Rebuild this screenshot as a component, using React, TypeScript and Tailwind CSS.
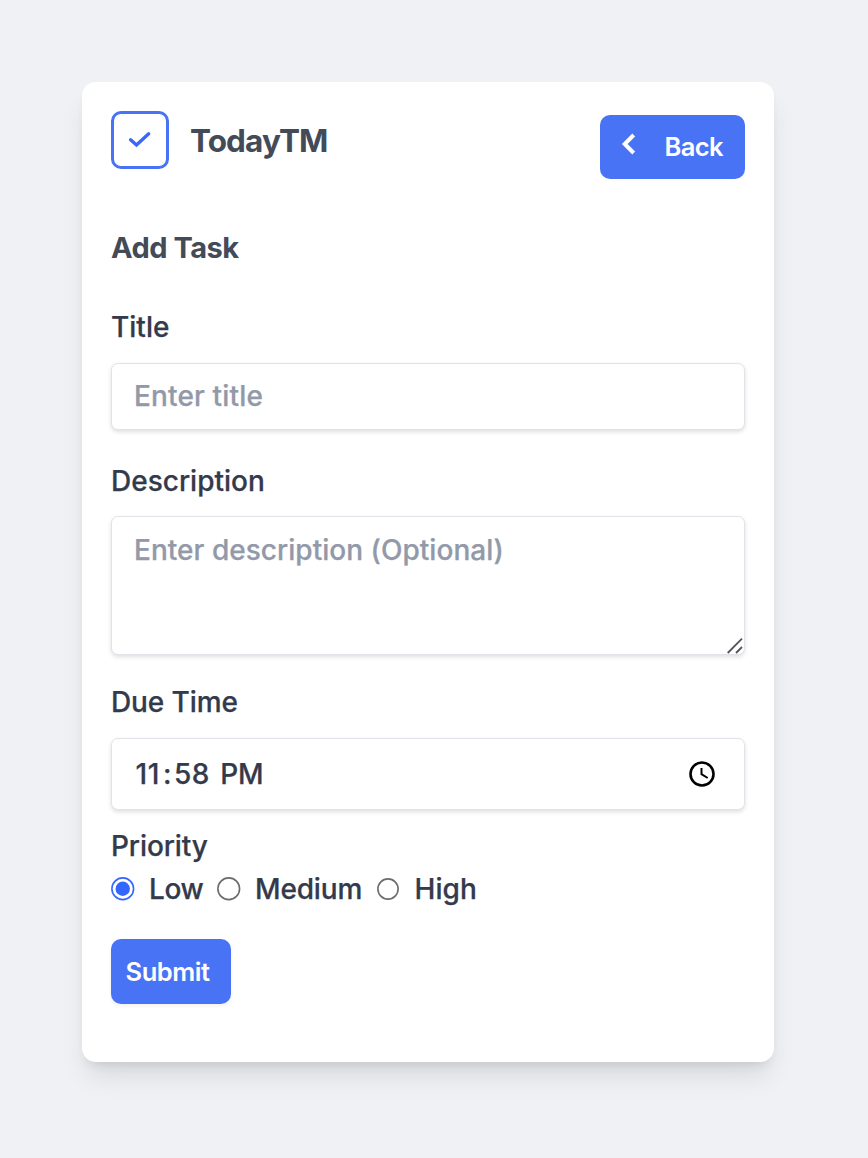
import { useState } from "react";

const field =
  "block w-full rounded-[7px] border border-[#e1e3e9] bg-white text-[28px] font-medium text-[#333a4b] shadow-[0_2px_4px_rgba(0,0,0,0.13)] outline-none placeholder:text-[#9299a8] placeholder:opacity-100";

const label = "block h-10 text-[28px] leading-10 font-medium [-webkit-text-stroke:0.25px_currentColor]";

function Radio({ checked, size }: { checked: boolean; size: number }) {
  const r = size / 2 - 0.9;
  return (
    <svg width={size} height={size} viewBox={`0 0 ${size} ${size}`} className="shrink-0">
      <circle cx={size / 2} cy={size / 2} r={r} fill="#fff" stroke={checked ? "#3366ff" : "#6b6b6b"} strokeWidth="1.6" />
      {checked && <circle cx={size / 2} cy={size / 2} r="7.2" fill="#3366ff" />}
    </svg>
  );
}

export default function App() {
  const [priority, setPriority] = useState("Low");
  const options = [
    { name: "Low", size: 23.5, gap: "w-[106px]", text: "ml-[14.5px] tracking-[-0.4px]" },
    { name: "Medium", size: 23.5, gap: "w-[160px]", text: "ml-[14.5px] tracking-[-0.15px]" },
    { name: "High", size: 22, gap: "w-[110px]", text: "ml-[15.5px] tracking-[0.1px]" },
  ];
  return (
    <main className="flex h-[1158px] w-[868px] items-start bg-[#eff1f5] pt-[82px] pl-[82px] font-['Inter','Liberation_Sans',sans-serif] text-[#333a4b]">
      <section className="flex h-[980px] w-[692px] flex-col rounded-[14px] bg-white px-[29px] pt-[29px] shadow-[0_18px_27px_-5px_rgba(0,0,0,0.1),0_7px_11px_-5px_rgba(0,0,0,0.1)]">
        <header className="flex h-[116px] items-start justify-between">
          <div className="flex items-center">
            <div className="flex size-[58px] items-center justify-center rounded-[10px] border-3 border-[#4973f5]">
              <svg width="24" height="18" viewBox="0 0 24 18" fill="none" stroke="#3b68f4" strokeWidth="3.4" strokeLinecap="round" strokeLinejoin="miter">
                <path d="M2.6 8.8 8.5 14 20.7 2.8" />
              </svg>
            </div>
            <h1 className="ml-[21px] pt-[2px] text-[31.5px] leading-[56px] font-bold tracking-[-0.9px] text-[#434b58]">TodayTM</h1>
          </div>
          <button className="mt-1 flex h-16 w-[145px] items-center rounded-[10px] bg-[#4973f5] pl-[21px] text-[25.5px] font-semibold text-white">
            <svg width="16" height="24" viewBox="0 0 16 24" fill="none" stroke="white" strokeWidth="4" className="mb-[7px]">
              <path d="M12.7 3 3.7 12l9 9" />
            </svg>
            <span className="ml-[27.5px] pt-px tracking-[-0.6px]">Back</span>
          </button>
        </header>
        <h2 className="h-[42px] text-[29px] leading-[42px] font-bold tracking-[-0.5px] text-[#434b58]">Add Task</h2>
        <form className="flex flex-col pt-[38px]" onSubmit={(e) => e.preventDefault()}>
          <label htmlFor="title" className={`${label} tracking-[0px]`}>Title</label>
          <input id="title" placeholder="Enter title" className={`${field} mt-4 h-[67px] px-[22px] pb-[2px] tracking-[0.15px] [-webkit-text-stroke:0.25px_currentColor]`} />
          <label htmlFor="description" className={`${label} mt-[31px] tracking-[0px]`}>Description</label>
          <div className="relative mt-[15px] h-[139px]">
            <textarea id="description" placeholder="Enter description (Optional)" className={`${field} h-[139px] resize-none px-[22px] pt-[13px] leading-10 tracking-[0.03px] [-webkit-text-stroke:0.25px_currentColor]`} />
            <svg width="16" height="16" viewBox="0 0 16 16" fill="none" stroke="#555" strokeWidth="1.8" className="pointer-events-none absolute right-[2px] bottom-[1.5px]">
              <path d="M.7 15 15 .7M9 15l6-6" />
            </svg>
          </div>
          <span className={`${label} mt-[27px] tracking-[-0.1px]`}>Due Time</span>
          <div className="mt-[16px] flex h-[72px] items-center justify-between rounded-[7px] border border-[#e1e3e9] bg-white pr-[29px] pl-[23.5px] text-[28px] font-medium shadow-[0_2px_4px_rgba(0,0,0,0.13)] [-webkit-text-stroke:0.25px_currentColor]">
            <div className="flex items-center">
              <span className="tracking-[0.6px]">11</span>
              <span className="ml-[3px]">:</span>
              <span className="ml-[2.5px] tracking-[0.4px]">58</span>
              <span className="ml-[10.5px] tracking-[-0.2px]">PM</span>
            </div>
            <svg width="26" height="26" viewBox="0 0 26 26" fill="none" stroke="black">
              <circle cx="13" cy="13" r="11.5" strokeWidth="2.6" />
              <path d="M12.5 7v6.2l6.2 3.8" strokeWidth="2" />
            </svg>
          </div>
          <span className={`${label} mt-[16px] tracking-[-0.1px]`}>Priority</span>
          <div role="radiogroup" className="mt-[3px] flex h-10 items-center">
            {options.map((o) => (
              <button key={o.name} type="button" role="radio" aria-checked={priority === o.name} onClick={() => setPriority(o.name)} className={`flex shrink-0 items-center text-[28px] leading-10 font-medium [-webkit-text-stroke:0.25px_currentColor] ${o.gap}`}>
                <Radio checked={priority === o.name} size={o.size} />
                <span className={o.text}>{o.name}</span>
              </button>
            ))}
          </div>
          <button className="mt-[30px] flex h-[65px] w-[120px] items-center rounded-[10px] bg-[#4973f5] pt-[2px] pl-[14.5px] text-[25.5px] font-semibold tracking-[-0.45px] text-white shadow-[0_2px_4px_rgba(0,0,0,0.06)]">
            Submit
          </button>
        </form>
      </section>
    </main>
  );
}
